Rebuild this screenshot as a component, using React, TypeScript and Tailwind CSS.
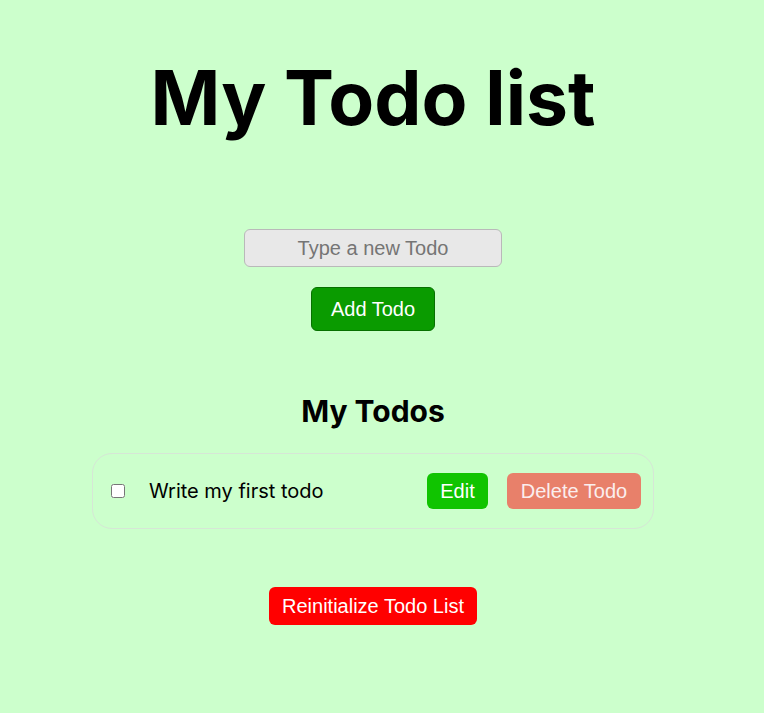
import { useState } from "react";

const inter = "font-['Inter',sans-serif]";
const arial = "font-['Liberation_Sans',Arial,sans-serif]";

export default function App() {
  const [todos] = useState([{ id: 1, text: "Write my first todo", done: false }]);

  return (
    <div className={`min-h-screen bg-[#ccffcc] pr-[18px] flex flex-col items-center ${inter}`}>
      <h1 className="mt-[60px] text-[75px] leading-[75px] font-bold text-black">My Todo list</h1>

      {/* New todo form */}
      <input
        type="text"
        placeholder="Type a new Todo"
        className={`mt-[94px] w-[258px] h-[38px] bg-[#e8e8e8] border border-[#b9b9b9] rounded-md text-center text-[20px] placeholder:text-[#757575] ${arial}`}
      />
      <button
        className={`mt-5 w-[124px] h-[44px] bg-[#0a9b00] border border-[#077000] rounded-md text-white text-[20px] ${arial}`}
      >
        Add Todo
      </button>

      <h2 className="mt-[62px] text-[30px] leading-[36px] font-bold text-black">My Todos</h2>

      <ul className="mt-6 flex flex-col gap-4">
        {todos.map((todo) => (
          <li
            key={todo.id}
            className="w-[562px] h-[76px] flex items-center pl-[18px] pr-3 border border-[#d6e6d6] rounded-[20px]"
          >
            <input type="checkbox" defaultChecked={todo.done} className="w-[14px] h-[14px]" />
            <span className="ml-6 flex-1 text-[20px] text-black">{todo.text}</span>
            <button className={`w-[61px] h-9 bg-[#10c400] rounded-md text-white text-[20px] ${arial}`}>
              Edit
            </button>
            <button
              className={`ml-[19px] w-[134px] h-9 bg-[#e8806a] rounded-md text-[#fbeeee] text-[20px] ${arial}`}
            >
              Delete Todo
            </button>
          </li>
        ))}
      </ul>

      <button
        className={`mt-[58px] w-[208px] h-[38px] bg-[#ff0000] rounded-md text-white text-[20px] ${arial}`}
      >
        Reinitialize Todo List
      </button>
    </div>
  );
}
